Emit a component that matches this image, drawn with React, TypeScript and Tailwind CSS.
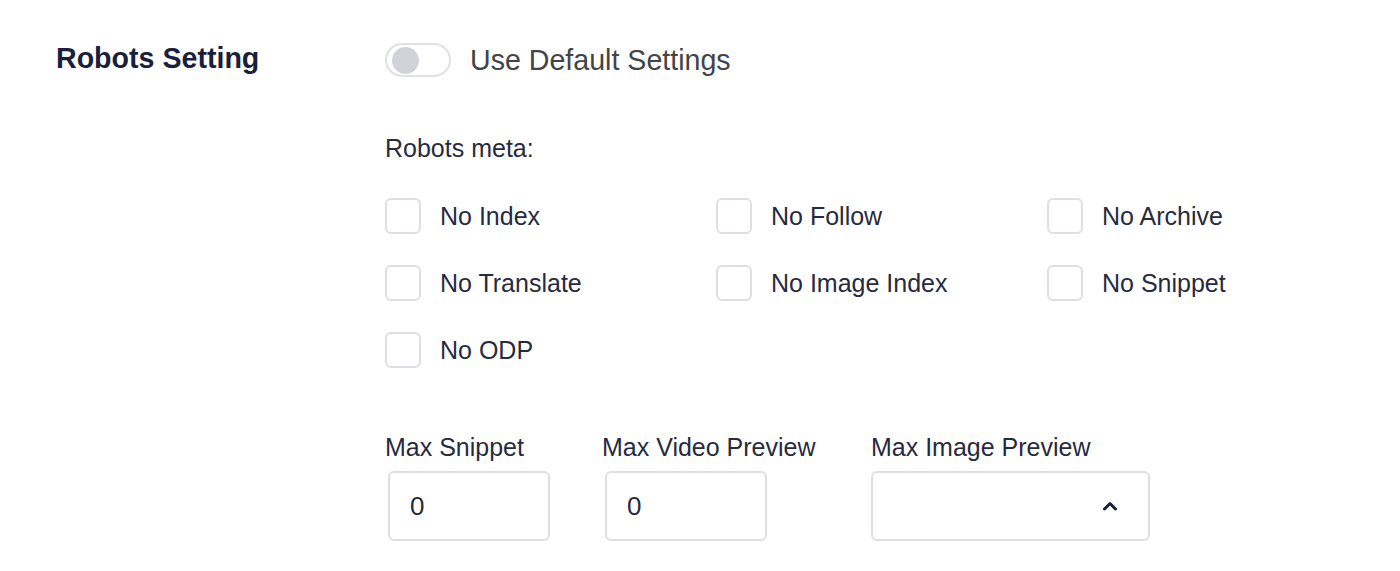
import { useState } from "react";

const robots = [
  "No Index",
  "No Follow",
  "No Archive",
  "No Translate",
  "No Image Index",
  "No Snippet",
  "No ODP",
];

export default function App() {
  const [useDefault, setUseDefault] = useState(false);
  const [checked, setChecked] = useState<string[]>([]);

  const toggle = (name: string) =>
    setChecked((c) => (c.includes(name) ? c.filter((n) => n !== name) : [...c, name]));

  return (
    <div className="min-h-[571px] w-full bg-white pl-[56px] pt-[41px] font-['Liberation_Sans',Arial,sans-serif] text-[#272b40]">
      <div className="flex">
        {/* left label */}
        <div className="w-[329px] shrink-0">
          <h2 className="text-[28.6px] font-bold leading-[34px] text-[#1a1f3c]">Robots Setting</h2>
        </div>

        {/* right settings */}
        <div className="flex flex-col pt-[2px]">
          <label className="flex h-[34px] cursor-pointer items-center gap-[19px]">
            <button
              type="button"
              onClick={() => setUseDefault(!useDefault)}
              className="flex h-[34px] w-[66px] items-center rounded-full border-2 border-[#e0e1e6] bg-white px-[5px]"
            >
              <span
                className={
                  useDefault
                    ? "h-[27px] w-[27px] translate-x-[29px] rounded-full bg-[#2563eb]"
                    : "h-[27px] w-[27px] rounded-full bg-[#d2d3d9]"
                }
              />
            </button>
            <span className="text-[28.6px] leading-[34px] text-[#434449]">Use Default Settings</span>
          </label>

          <p className="mt-[56px] text-[25px] leading-[30px]">Robots meta:</p>

          <div className="mt-[35px] grid grid-cols-[331px_331px_331px] gap-y-[31px]">
            {robots.map((name) => (
              <label key={name} className="flex h-[36px] cursor-pointer items-center gap-[19px]">
                <span
                  onClick={() => toggle(name)}
                  className={
                    checked.includes(name)
                      ? "h-[36px] w-[36px] rounded-[6px] border-2 border-[#2563eb] bg-[#2563eb]"
                      : "h-[36px] w-[36px] rounded-[6px] border-2 border-[#dddfe4] bg-white"
                  }
                />
                <span className="text-[25px] leading-[30px]">{name}</span>
              </label>
            ))}
          </div>

          <div className="mt-[64px] flex">
            <div className="flex w-[217px] flex-col">
              <span className="text-[25px] leading-[30px]">Max Snippet</span>
              <input
                defaultValue="0"
                className="ml-[3px] mt-[9px] h-[70px] w-[162px] rounded-[6px] border-2 border-[#dddfe4] px-[20px] text-[26px] text-[#272b40] outline-none"
              />
            </div>
            <div className="flex w-[269px] flex-col">
              <span className="text-[25px] leading-[30px]">Max Video Preview</span>
              <input
                defaultValue="0"
                className="ml-[3px] mt-[9px] h-[70px] w-[162px] rounded-[6px] border-2 border-[#dddfe4] px-[20px] text-[26px] text-[#272b40] outline-none"
              />
            </div>
            <div className="flex flex-col">
              <span className="text-[25px] leading-[30px]">Max Image Preview</span>
              <button
                type="button"
                className="mt-[9px] flex h-[70px] w-[279px] items-center justify-end rounded-[6px] border-2 border-[#dddfe4] bg-white pr-[30px]"
              >
                <svg width="16" height="10" viewBox="0 0 16 10" fill="none">
                  <path d="M2.5 8L8 2.5L13.5 8" stroke="#1c2036" strokeWidth="3" strokeLinecap="round" strokeLinejoin="round" />
                </svg>
              </button>
            </div>
          </div>
        </div>
      </div>
    </div>
  );
}
